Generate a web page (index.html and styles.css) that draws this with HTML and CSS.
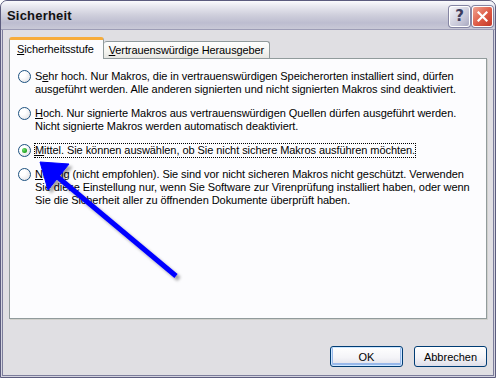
FILE: index.html
```html
<!doctype html>
<html lang="de">
<head>
	<meta charset="UTF-8">
	<title>Sicherheit</title>
	<link rel="stylesheet" href="styles.css">
</head>
<body>
	<div class="window">
		<div class="titlebar">
			<span class="title">Sicherheit</span>
			<div class="caption-buttons">
				<span class="cap help">?</span>
				<span class="cap close">
					<svg width="11" height="11" viewBox="0 0 11 11"><path d="M1.5 1.5 L9.5 9.5 M9.5 1.5 L1.5 9.5" stroke="#fff" stroke-width="2.2" stroke-linecap="square"/></svg>
				</span>
			</div>
		</div>
		<div class="client">
			<div class="tabs">
				<div class="tab active"><u>S</u>icherheitsstufe</div>
				<div class="tab"><u>V</u>ertrauenswürdige Herausgeber</div>
			</div>
			<div class="panel">
				<label class="option">
					<span class="radio"></span>
					<span class="text">S<u>e</u>hr hoch. Nur Makros, die in vertrauenswürdigen Speicherorten installiert sind, dürfen<br>ausgeführt werden. Alle anderen signierten und nicht signierten Makros sind deaktiviert.</span>
				</label>
				<label class="option">
					<span class="radio"></span>
					<span class="text"><u>H</u>och. Nur signierte Makros aus vertrauenswürdigen Quellen dürfen ausgeführt werden.<br>Nicht signierte Makros werden automatisch deaktiviert.</span>
				</label>
				<label class="option">
					<span class="radio checked"></span>
					<span class="text focus"><u>M</u>ittel. Sie können auswählen, ob Sie nicht sichere Makros ausführen möchten.</span>
				</label>
				<label class="option">
					<span class="radio"></span>
					<span class="text"><u>N</u>iedrig (nicht empfohlen). Sie sind vor nicht sicheren Makros nicht geschützt. Verwenden<br>Sie diese Einstellung nur, wenn Sie Software zur Virenprüfung installiert haben, oder wenn<br>Sie die Sicherheit aller zu öffnenden Dokumente überprüft haben.</span>
				</label>
			</div>
			<div class="actions">
				<button class="btn default">OK</button>
				<button class="btn">Abbrechen</button>
			</div>
		</div>
		<svg class="arrow" width="496" height="378" viewBox="0 0 496 378">
			<defs>
				<filter id="shade" x="-20%" y="-20%" width="140%" height="140%">
					<feDropShadow dx="3" dy="3" stdDeviation="1.5" flood-color="#000" flood-opacity="0.35"/>
				</filter>
			</defs>
			<g filter="url(#shade)" fill="#0000ff" stroke="#0000ff">
				<line x1="176" y1="276" x2="54" y2="174" stroke-width="5"/>
				<polygon points="40,162 69,164 48,190" stroke-width="1" stroke-linejoin="round"/>
			</g>
		</svg>
	</div>
</body>
</html>
```

FILE: styles.css
```css
body { margin: 0; background: #fff; font-family: "Liberation Sans", Arial, sans-serif; font-size: 11px; color: #000; }
.window { position: relative; width: 496px; height: 378px; box-sizing: border-box; display: flex; flex-direction: column; padding: 0 2px 2px; border: 1px solid #5c5c7e; border-radius: 7px 7px 0 0; background: #e0dfe3; box-shadow: inset 0 0 0 1px #d4d4e0, inset 0 0 0 2px #7d7d9b; }
.titlebar { display: flex; align-items: center; justify-content: space-between; height: 28px; margin: 0 -2px; padding: 0 2px 0 6px; border-radius: 6px 6px 0 0; background: linear-gradient(#fbfbfd 0%, #e9e9f0 18%, #cfcfdc 50%, #bdbdd0 78%, #c9c9d7 100%); border-bottom: 1px solid #9d9db6; }
.title { font-size: 13px; font-weight: bold; color: #111; letter-spacing: 0.2px; }
.caption-buttons { display: flex; gap: 2px; margin-top: 2px; }
.cap { display: flex; align-items: center; justify-content: center; width: 19px; height: 19px; border: 1px solid #fff; border-radius: 3px; box-shadow: 0 0 0 1px #8585a3; }
.help { background: linear-gradient(135deg, #f4f4f8, #c4c4d6 70%, #a9a9c0); color: #3c3c5c; font: bold 15px "DejaVu Sans", sans-serif; }
.close { background: linear-gradient(135deg, #f0a492, #dd5a45 55%, #c4382a); }
.client { flex: 1; display: flex; flex-direction: column; padding: 7px 6px 8px 6px; }
.tabs { display: flex; align-items: flex-end; height: 21px; position: relative; z-index: 1; }
.tab { height: 16px; line-height: 16px; padding: 0 5px; border: 1px solid #919b9c; border-bottom: 0; border-radius: 3px 3px 0 0; background: linear-gradient(#fefefe, #f4f4f0 60%, #e6e6e2); white-space: nowrap; letter-spacing: -0.1px; }
.tab.active { height: 19px; line-height: 19px; padding: 0 9px 0 7px; margin-bottom: -1px; border-top: 3px solid #f7ac3a; border-radius: 3px 3px 0 0; background: #fcfcfe; }
.tab + .tab { border-left: 0; }
.panel { flex: 1; display: flex; flex-direction: column; gap: 9px; padding: 10px 0 0 8px; border: 1px solid #919b9c; background: #fcfcfe; box-shadow: 1px 1px 0 #d0d0cc; }
.option { display: flex; align-items: flex-start; gap: 3px; }
.radio { width: 11px; height: 11px; margin-top: 1px; border: 1px solid #1c5180; border-radius: 50%; background: radial-gradient(circle at 30% 30%, #fff 30%, #dcdce0 100%); display: flex; align-items: center; justify-content: center; }
.radio.checked::after { content: ""; width: 5px; height: 5px; border-radius: 50%; background: radial-gradient(circle at 35% 35%, #6fe06f, #21a121 70%); }
.text { line-height: 13px; white-space: nowrap; letter-spacing: -0.06px; border: 1px dotted transparent; }
.text.focus { border-color: #000; }
.actions { display: flex; justify-content: flex-end; gap: 11px; margin-top: 27px; }
.btn { width: 73px; height: 21px; padding: 0; border: 1px solid #003c74; border-radius: 3px; background: linear-gradient(#fff, #f4f4f8 55%, #dedee8); font: 11px "Liberation Sans", Arial, sans-serif; color: #000; }
.btn.default { box-shadow: inset 0 0 0 1px #cee7ff, inset 0 -1px 0 2px #98b8ea; }
.arrow { position: absolute; left: -1px; top: -1px; pointer-events: none; }
```
